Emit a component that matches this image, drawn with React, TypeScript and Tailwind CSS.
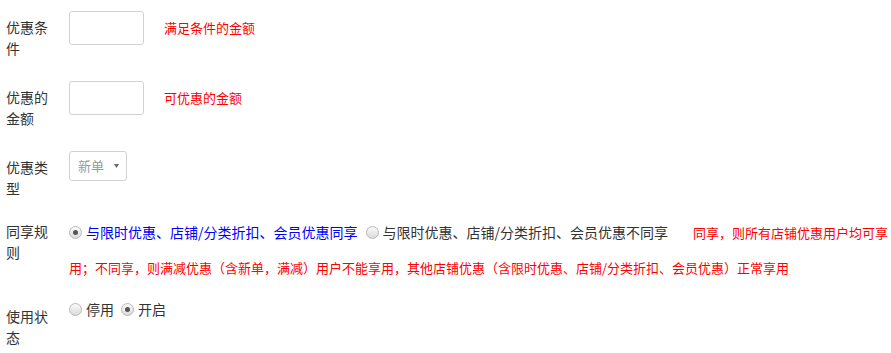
import React from "react";

const Radio = ({ checked }: { checked?: boolean }) => (
  <span className="inline-flex h-[13px] w-[13px] shrink-0 items-center justify-center rounded-full border border-[#b8b8b8] bg-linear-to-b from-[#fbfbfb] to-[#dadada]">
    {checked && <span className="h-[5px] w-[5px] rounded-full bg-[#555]" />}
  </span>
);

const Label = ({ text }: { text: string }) => (
  <div className="mt-[6px] w-12 shrink-0 text-[14px] leading-[21px] text-[#333]">{text}</div>
);

const TextInput = () => (
  <div className="h-[34px] w-[75px] shrink-0 rounded-[3px] border border-[#d2d2d2] bg-white" />
);

export default function App() {
  return (
    <div
      className="min-h-[353px] w-[891px] bg-white pl-[6px] pt-[11px] text-[#333]"
      style={{ fontFamily: '"Noto Sans CJK SC", "Noto Sans", sans-serif' }}
    >
      {/* 优惠条件 */}
      <div className="flex">
        <Label text="优惠条件" />
        <div className="ml-[15px] flex h-[34px] items-center">
          <TextInput />
          <span className="ml-[20px] text-[13px] text-[#ff0000]">满足条件的金额</span>
        </div>
      </div>

      {/* 优惠的金额 */}
      <div className="mt-[22px] flex">
        <Label text="优惠的金额" />
        <div className="ml-[15px] flex h-[34px] items-center">
          <TextInput />
          <span className="ml-[20px] text-[13px] text-[#ff0000]">可优惠的金额</span>
        </div>
      </div>

      {/* 优惠类型 */}
      <div className="mt-[22px] flex">
        <Label text="优惠类型" />
        <div className="ml-[15px]">
          <div className="flex h-[30px] w-[58px] items-center justify-between rounded-[3px] border border-[#d2d2d2] bg-white pl-[8px] pr-[7px] text-[13px] text-[#999]">
            <span>新单</span>
            <svg width="5" height="4" viewBox="0 0 5 4">
              <path d="M0 0 H5 L2.5 4 Z" fill="#666" />
            </svg>
          </div>
        </div>
      </div>

      {/* 同享规则 */}
      <div className="mt-[16px] flex">
        <Label text="同享规则" />
        <div className="ml-[15px] flex flex-1 flex-col text-[14px]">
          <div className="flex h-[35px] items-center whitespace-nowrap">
            <Radio checked />
            <span className="ml-[4px] text-[#0000ff]">与限时优惠、店铺/分类折扣、会员优惠同享</span>
            <span className="ml-[8px] inline-flex">
              <Radio />
            </span>
            <span className="ml-[4px] text-[#333]">与限时优惠、店铺/分类折扣、会员优惠不同享</span>
            <span className="ml-[25px] text-[13px] text-[#ff0000]">同享，则所有店铺优惠用户均可享</span>
          </div>
          <div className="flex h-[35px] items-center whitespace-nowrap text-[13px] text-[#ff0000]">
            用；不同享，则满减优惠（含新单，满减）用户不能享用，其他店铺优惠（含限时优惠、店铺/分类折扣、会员优惠）正常享用
          </div>
        </div>
      </div>

      {/* 使用状态 */}
      <div className="mt-[15px] flex">
        <Label text="使用状态" />
        <div className="ml-[15px] flex h-[18px] items-center text-[14px]">
          <Radio />
          <span className="ml-[4px]">停用</span>
          <span className="ml-[7px] inline-flex">
            <Radio checked />
          </span>
          <span className="ml-[4px]">开启</span>
        </div>
      </div>
    </div>
  );
}
